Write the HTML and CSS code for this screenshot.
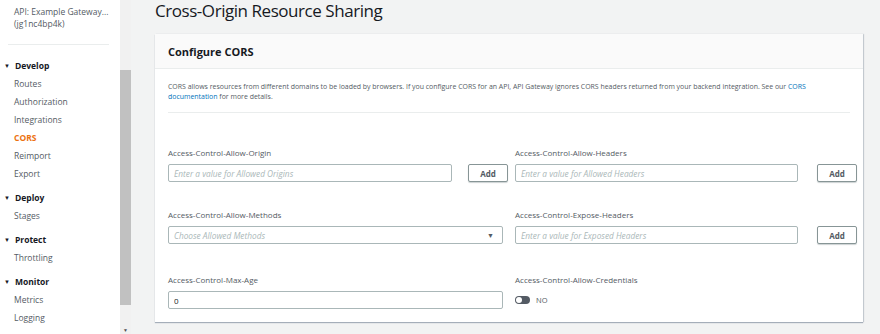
FILE: index.html
```html
<!DOCTYPE html>
<html>
<head>
    <title>CORS - API Gateway</title>
    <link rel="stylesheet" href="styles.css">
</head>
<body>
    <div class="sidebar">
        <div class="api-name">API: Example Gateway...<br>(jg1nc4bp4k)</div>
        <div class="nav-group">
            <div class="nav-title"><span class="caret">&#9660;</span>Develop</div>
            <a href="#">Routes</a>
            <a href="#">Authorization</a>
            <a href="#">Integrations</a>
            <a href="#" class="active">CORS</a>
            <a href="#">Reimport</a>
            <a href="#">Export</a>
        </div>
        <div class="nav-group">
            <div class="nav-title"><span class="caret">&#9660;</span>Deploy</div>
            <a href="#">Stages</a>
        </div>
        <div class="nav-group">
            <div class="nav-title"><span class="caret">&#9660;</span>Protect</div>
            <a href="#">Throttling</a>
        </div>
        <div class="nav-group">
            <div class="nav-title"><span class="caret">&#9660;</span>Monitor</div>
            <a href="#">Metrics</a>
            <a href="#">Logging</a>
        </div>
    </div>

    <div class="scrollbar">
        <div class="thumb"></div>
        <div class="arrow">&#9660;</div>
    </div>

    <div class="main">
        <h1>Cross-Origin Resource Sharing</h1>

        <div class="card">
            <div class="card-header">Configure CORS</div>
            <div class="card-body">
                <p class="intro">CORS allows resources from different domains to be loaded by browsers. If you configure CORS for an API, API Gateway ignores CORS headers returned from your backend integration. See our <a href="#">CORS documentation</a> for more details.</p>

                <div class="fields">
                    <div class="field">
                        <label>Access-Control-Allow-Origin</label>
                        <div class="field-row">
                            <input type="text" placeholder="Enter a value for Allowed Origins">
                            <button class="add-button">Add</button>
                        </div>
                    </div>
                    <div class="field right">
                        <label>Access-Control-Allow-Headers</label>
                        <div class="field-row">
                            <input type="text" placeholder="Enter a value for Allowed Headers">
                            <button class="add-button">Add</button>
                        </div>
                    </div>

                    <div class="field">
                        <label>Access-Control-Allow-Methods</label>
                        <div class="field-row">
                            <div class="select">
                                <span>Choose Allowed Methods</span>
                                <span class="select-arrow">&#9660;</span>
                            </div>
                        </div>
                    </div>
                    <div class="field right">
                        <label>Access-Control-Expose-Headers</label>
                        <div class="field-row">
                            <input type="text" placeholder="Enter a value for Exposed Headers">
                            <button class="add-button">Add</button>
                        </div>
                    </div>

                    <div class="field last">
                        <label>Access-Control-Max-Age</label>
                        <div class="field-row">
                            <input type="text" value="0" class="value">
                        </div>
                    </div>
                    <div class="field right last">
                        <label>Access-Control-Allow-Credentials</label>
                        <div class="toggle-row">
                            <span class="toggle"><span class="knob"></span></span>
                            <span class="toggle-label">NO</span>
                        </div>
                    </div>
                </div>
            </div>
        </div>
    </div>
</body>
</html>
```

FILE: styles.css
```css
body {
    font-family: "Open Sans", Arial, sans-serif;
    margin: 0;
    display: flex;
    height: 334px;
    overflow: hidden;
    color: #16191f;
}

.sidebar {
    width: 120px;
    flex-shrink: 0;
    background-color: #fff;
    font-size: 8.5px;
}

.api-name {
    color: #545b64;
    padding: 6px 0 14px 6px;
    margin: 0 11px 0 8px;
    line-height: 12px;
    border-bottom: 1px solid #eaeded;
}

.nav-group {
    display: flex;
    flex-direction: column;
    margin-top: 6px;
}

.api-name + .nav-group {
    margin-top: 12px;
}

.nav-title {
    font-weight: bold;
    color: #16191f;
    line-height: 18px;
    padding-left: 4px;
}

.caret {
    font-size: 6px;
    margin-right: 5px;
    vertical-align: 1px;
}

.nav-group a {
    color: #545b64;
    text-decoration: none;
    line-height: 18px;
    padding-left: 14px;
}

.nav-group a.active {
    color: #ec7211;
    font-weight: bold;
}

.scrollbar {
    width: 11px;
    flex-shrink: 0;
    background-color: #f1f1f1;
    display: flex;
    flex-direction: column;
    padding-top: 70px;
}

.thumb {
    height: 235px;
    background-color: #c1c1c1;
}

.arrow {
    margin-top: auto;
    font-size: 5px;
    color: #505050;
    text-align: center;
    padding-bottom: 1px;
}

.main {
    flex: 1;
    background-color: #f2f3f3;
    padding: 0 17px 0 24px;
}

h1 {
    font-weight: normal;
    font-size: 17px;
    letter-spacing: -0.45px;
    color: #16191f;
    margin: 0;
    line-height: 21px;
}

.card {
    margin-top: 13px;
    background-color: #fff;
    box-shadow: 0 1px 1px rgba(0, 31, 63, 0.3), 1px 0 1px rgba(0, 31, 63, 0.15);
    height: 288px;
}

.card-header {
    background-color: #fafafa;
    border-bottom: 1px solid #eaeded;
    height: 34px;
    line-height: 36px;
    padding-left: 13px;
    font-weight: bold;
    font-size: 11px;
}

.card-body {
    padding: 13px 6px 0 13px;
}

.intro {
    font-size: 6.95px;
    color: #545b64;
    line-height: 10px;
    margin: 0 7px 0 0;
    padding: 0 10px 10px 0;
    border-bottom: 1px solid #eaeded;
}

.intro a {
    color: #0073bb;
    text-decoration: none;
}

.fields {
    display: grid;
    grid-template-columns: 340px 1fr;
    column-gap: 7px;
    padding-top: 34px;
}

.field {
    display: flex;
    flex-direction: column;
    height: 62px;
}

.field.last {
    margin-top: 3px;
}

.field label {
    font-size: 8px;
    color: #545b64;
    line-height: 11px;
    margin-bottom: 6px;
}

.field-row {
    display: flex;
    align-items: center;
}

.field-row input {
    width: 284px;
    height: 18px;
    box-sizing: border-box;
    border: 1px solid #aab7b8;
    border-radius: 2px;
    padding: 0 5px;
    font-family: "Open Sans", Arial, sans-serif;
    font-size: 8.3px;
}

.field.right .field-row input {
    width: 283px;
}

.field-row input::placeholder {
    font-style: italic;
    color: #aab7b8;
}

.field-row input.value {
    width: 335px;
    font-size: 8px;
    color: #16191f;
}

.add-button {
    margin-left: 16px;
    width: 40px;
    height: 18px;
    background-color: #fff;
    border: 1px solid #879596;
    border-radius: 2px;
    box-shadow: 0 1px 1px rgba(0, 28, 36, 0.2);
    font-family: "Open Sans", Arial, sans-serif;
    font-weight: bold;
    font-size: 8px;
    color: #545b64;
    padding: 0;
}

.field.right .add-button {
    margin-left: 19px;
}

.select {
    width: 335px;
    height: 18px;
    box-sizing: border-box;
    border: 1px solid #aab7b8;
    border-radius: 2px;
    padding: 0 8px 0 5px;
    display: flex;
    align-items: center;
    justify-content: space-between;
    font-size: 8.3px;
    font-style: italic;
    color: #aab7b8;
}

.select-arrow {
    font-style: normal;
    font-size: 7px;
    color: #545b64;
}

.toggle-row {
    display: flex;
    align-items: center;
    height: 18px;
}

.toggle {
    width: 15px;
    height: 8px;
    border-radius: 4px;
    background-color: #545b64;
    display: flex;
    align-items: center;
    padding-left: 1px;
    box-sizing: border-box;
}

.knob {
    width: 6px;
    height: 6px;
    border-radius: 50%;
    background-color: #fff;
}

.toggle-label {
    font-size: 7.5px;
    color: #545b64;
    margin-left: 6px;
}
```
